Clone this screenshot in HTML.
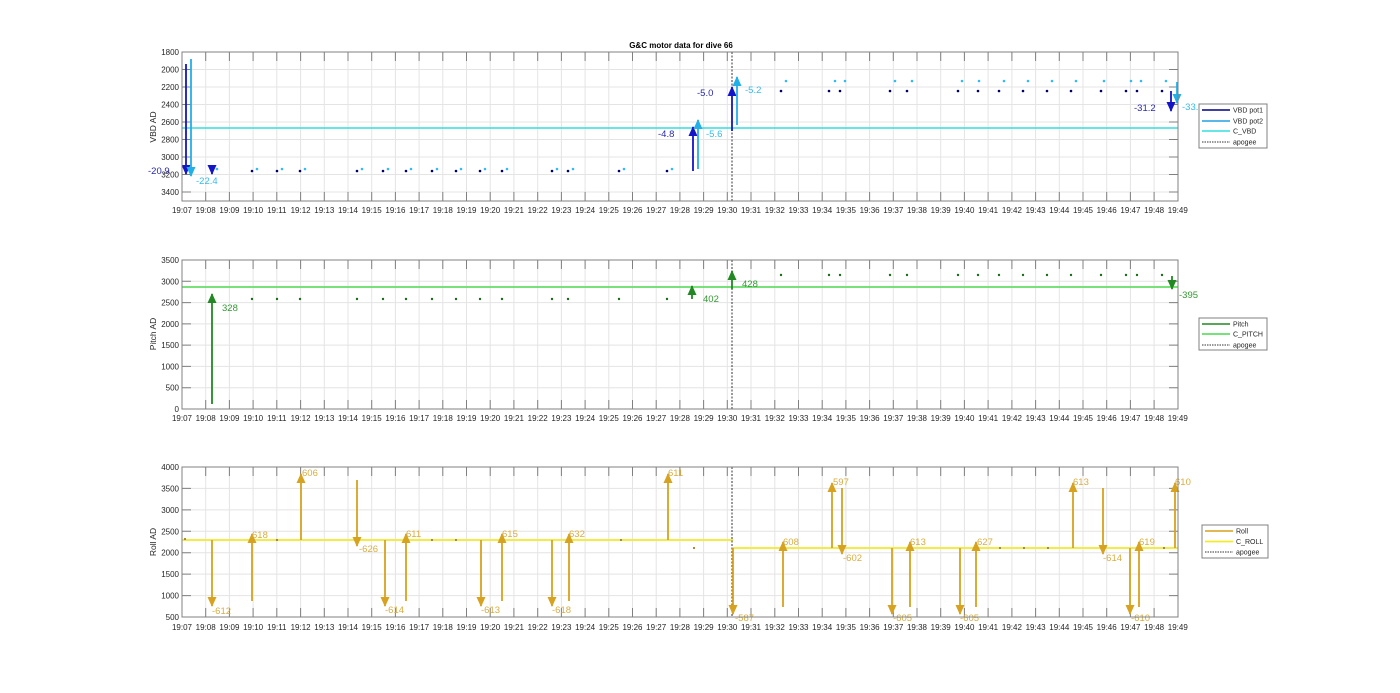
<!DOCTYPE html>
<html><head><meta charset="utf-8"><style>
html,body{margin:0;padding:0;background:#fff;}
svg{display:block;font-family:"Liberation Sans",Arial,sans-serif;}
.xl text{font-size:8px;fill:#262626;text-anchor:middle;}
.yl text{font-size:8px;fill:#262626;text-anchor:end;}
.lg text{font-size:7px;fill:#262626;}
</style></head><body>
<svg width="1400" height="693" viewBox="0 0 1400 693" xmlns="http://www.w3.org/2000/svg">
<defs>
<path id="vg" d="M205.7 0V1M229.4 0V1M253.1 0V1M276.8 0V1M300.6 0V1M324.3 0V1M348 0V1M371.7 0V1M395.4 0V1M419.1 0V1M442.8 0V1M466.5 0V1M490.2 0V1M513.9 0V1M537.7 0V1M561.4 0V1M585.1 0V1M608.8 0V1M632.5 0V1M656.2 0V1M679.9 0V1M703.6 0V1M727.3 0V1M751 0V1M774.8 0V1M798.5 0V1M822.2 0V1M845.9 0V1M869.6 0V1M893.3 0V1M917 0V1M940.7 0V1M964.4 0V1M988.1 0V1M1011.9 0V1M1035.6 0V1M1059.3 0V1M1083 0V1M1106.7 0V1M1130.4 0V1M1154.1 0V1"/>
<marker id="mB" markerUnits="userSpaceOnUse" markerWidth="10" markerHeight="9" refX="9" refY="4.5" orient="auto"><path d="M0,0L10,4.5L0,9z" fill="#1515c8"/></marker>
<marker id="mC" markerUnits="userSpaceOnUse" markerWidth="10" markerHeight="9" refX="9" refY="4.5" orient="auto"><path d="M0,0L10,4.5L0,9z" fill="#22b0e8"/></marker>
<marker id="mG" markerUnits="userSpaceOnUse" markerWidth="10" markerHeight="9" refX="9" refY="4.5" orient="auto"><path d="M0,0L10,4.5L0,9z" fill="#228822"/></marker>
<marker id="mR" markerUnits="userSpaceOnUse" markerWidth="10" markerHeight="9" refX="9" refY="4.5" orient="auto"><path d="M0,0L10,4.5L0,9z" fill="#d6a21f"/></marker>
</defs>

<!-- title -->
<text x="681" y="48" font-size="8" font-weight="bold" text-anchor="middle" fill="#000">G&amp;C motor data for dive 66</text>

<!-- ============ PANEL 1 ============ -->
<g>
<rect x="182" y="52" width="996" height="149" fill="#fff"/>
<use href="#vg" transform="translate(0,52) scale(1,149)" stroke="#e4e4e4" stroke-width="1" vector-effect="non-scaling-stroke"/>
<path d="M182 69.5H1178M182 87H1178M182 104.5H1178M182 122H1178M182 139.5H1178M182 157H1178M182 174.5H1178M182 192H1178" stroke="#e4e4e4"/>
<use href="#vg" transform="translate(0,52) scale(1,9)" stroke="#808080" vector-effect="non-scaling-stroke"/>
<use href="#vg" transform="translate(0,192) scale(1,9)" stroke="#808080" vector-effect="non-scaling-stroke"/>
<path d="M182 69.5h9M182 87h9M182 104.5h9M182 122h9M182 139.5h9M182 157h9M182 174.5h9M182 192h9M1178 69.5h-9M1178 87h-9M1178 104.5h-9M1178 122h-9M1178 139.5h-9M1178 157h-9M1178 174.5h-9M1178 192h-9" stroke="#808080"/>
<line x1="182" y1="128" x2="1178" y2="128" stroke="#33dddd" stroke-width="1.5"/>
<line x1="732" y1="52" x2="732" y2="201" stroke="#333" stroke-dasharray="2,1.5"/>
<!-- dots pot1 -->
<g fill="#000066">
<circle cx="252" cy="171" r="1.3"/><circle cx="277" cy="171" r="1.3"/><circle cx="300" cy="171" r="1.3"/><circle cx="357" cy="171" r="1.3"/><circle cx="383" cy="171" r="1.3"/><circle cx="406" cy="171" r="1.3"/><circle cx="432" cy="171" r="1.3"/><circle cx="456" cy="171" r="1.3"/><circle cx="480" cy="171" r="1.3"/><circle cx="502" cy="171" r="1.3"/><circle cx="552" cy="171" r="1.3"/><circle cx="568" cy="171" r="1.3"/><circle cx="619" cy="171" r="1.3"/><circle cx="667" cy="171" r="1.3"/>
<circle cx="781" cy="91" r="1.3"/><circle cx="829" cy="91" r="1.3"/><circle cx="840" cy="91" r="1.3"/><circle cx="890" cy="91" r="1.3"/><circle cx="907" cy="91" r="1.3"/><circle cx="958" cy="91" r="1.3"/><circle cx="978" cy="91" r="1.3"/><circle cx="999" cy="91" r="1.3"/><circle cx="1023" cy="91" r="1.3"/><circle cx="1047" cy="91" r="1.3"/><circle cx="1071" cy="91" r="1.3"/><circle cx="1101" cy="91" r="1.3"/><circle cx="1126" cy="91" r="1.3"/><circle cx="1137" cy="91" r="1.3"/><circle cx="1162" cy="91" r="1.3"/>
</g>
<g fill="#33bbee">
<circle cx="217" cy="169" r="1.3"/><circle cx="257" cy="169" r="1.3"/><circle cx="282" cy="169" r="1.3"/><circle cx="305" cy="169" r="1.3"/><circle cx="362" cy="169" r="1.3"/><circle cx="388" cy="169" r="1.3"/><circle cx="411" cy="169" r="1.3"/><circle cx="437" cy="169" r="1.3"/><circle cx="461" cy="169" r="1.3"/><circle cx="485" cy="169" r="1.3"/><circle cx="507" cy="169" r="1.3"/><circle cx="557" cy="169" r="1.3"/><circle cx="573" cy="169" r="1.3"/><circle cx="624" cy="169" r="1.3"/><circle cx="672" cy="169" r="1.3"/>
<circle cx="786" cy="81" r="1.3"/><circle cx="835" cy="81" r="1.3"/><circle cx="845" cy="81" r="1.3"/><circle cx="895" cy="81" r="1.3"/><circle cx="912" cy="81" r="1.3"/><circle cx="962" cy="81" r="1.3"/><circle cx="979" cy="81" r="1.3"/><circle cx="1004" cy="81" r="1.3"/><circle cx="1028" cy="81" r="1.3"/><circle cx="1052" cy="81" r="1.3"/><circle cx="1076" cy="81" r="1.3"/><circle cx="1104" cy="81" r="1.3"/><circle cx="1131" cy="81" r="1.3"/><circle cx="1141" cy="81" r="1.3"/><circle cx="1166" cy="81" r="1.3"/>
</g>
<!-- arrows -->
<g stroke-width="1.8">
<line x1="186" y1="64" x2="186" y2="174" stroke="#1515c8" marker-end="url(#mB)"/>
<line x1="212" y1="166" x2="212" y2="174" stroke="#1515c8" marker-end="url(#mB)"/>
<line x1="191" y1="59" x2="191" y2="176" stroke="#22b0e8" marker-end="url(#mC)"/>
<line x1="693" y1="171" x2="693" y2="127" stroke="#1515c8" marker-end="url(#mB)"/>
<line x1="698" y1="169" x2="698" y2="120" stroke="#22b0e8" marker-end="url(#mC)"/>
<line x1="732" y1="131" x2="732" y2="87" stroke="#1515c8" marker-end="url(#mB)"/>
<line x1="737" y1="125" x2="737" y2="77" stroke="#22b0e8" marker-end="url(#mC)"/>
<line x1="1171" y1="91" x2="1171" y2="111" stroke="#1515c8" marker-end="url(#mB)"/>
<line x1="1177" y1="82" x2="1177" y2="103" stroke="#22b0e8" marker-end="url(#mC)"/>
</g>
<g font-size="9.5">
<text x="148" y="174" fill="#2a2aaa">-20.9</text>
<text x="196" y="184" fill="#33bbee">-22.4</text>
<text x="658" y="137" fill="#2a2aaa">-4.8</text>
<text x="706" y="137" fill="#33bbee">-5.6</text>
<text x="697" y="96" fill="#2a2aaa">-5.0</text>
<text x="745" y="93" fill="#33bbee">-5.2</text>
<text x="1134" y="111" fill="#2a2aaa">-31.2</text>
<text x="1182" y="110" fill="#33bbee">-33.0</text>
</g>
<rect x="182" y="52" width="996" height="149" fill="none" stroke="#808080"/>
<g class="yl"><text x="179" y="55">1800</text><text x="179" y="72.5">2000</text><text x="179" y="90">2200</text><text x="179" y="107.5">2400</text><text x="179" y="125">2600</text><text x="179" y="142.5">2800</text><text x="179" y="160">3000</text><text x="179" y="177.5">3200</text><text x="179" y="195">3400</text></g>
<text transform="translate(156,127) rotate(-90)" font-size="8.5" text-anchor="middle" fill="#262626">VBD AD</text>
<g class="lg">
<rect x="1199" y="104" width="68" height="44" fill="#fff" stroke="#808080"/>
<line x1="1202" y1="110" x2="1230" y2="110" stroke="#000080" stroke-width="1.5"/><text x="1233" y="112.5">VBD pot1</text>
<line x1="1202" y1="121" x2="1230" y2="121" stroke="#22a0e0" stroke-width="1.5"/><text x="1233" y="123.5">VBD pot2</text>
<line x1="1202" y1="131" x2="1230" y2="131" stroke="#33dddd" stroke-width="1.5"/><text x="1233" y="133.5">C_VBD</text>
<line x1="1202" y1="142" x2="1230" y2="142" stroke="#333" stroke-dasharray="1.5,1"/><text x="1233" y="144.5">apogee</text>
</g>
<g class="xl" transform="translate(0,213)"><text x="182">19:07</text><text x="205.7">19:08</text><text x="229.4">19:09</text><text x="253.1">19:10</text><text x="276.8">19:11</text><text x="300.6">19:12</text><text x="324.3">19:13</text><text x="348">19:14</text><text x="371.7">19:15</text><text x="395.4">19:16</text><text x="419.1">19:17</text><text x="442.8">19:18</text><text x="466.5">19:19</text><text x="490.2">19:20</text><text x="513.9">19:21</text><text x="537.7">19:22</text><text x="561.4">19:23</text><text x="585.1">19:24</text><text x="608.8">19:25</text><text x="632.5">19:26</text><text x="656.2">19:27</text><text x="679.9">19:28</text><text x="703.6">19:29</text><text x="727.3">19:30</text><text x="751">19:31</text><text x="774.8">19:32</text><text x="798.5">19:33</text><text x="822.2">19:34</text><text x="845.9">19:35</text><text x="869.6">19:36</text><text x="893.3">19:37</text><text x="917">19:38</text><text x="940.7">19:39</text><text x="964.4">19:40</text><text x="988.1">19:41</text><text x="1011.9">19:42</text><text x="1035.6">19:43</text><text x="1059.3">19:44</text><text x="1083">19:45</text><text x="1106.7">19:46</text><text x="1130.4">19:47</text><text x="1154.1">19:48</text><text x="1177.8">19:49</text></g>
</g>

<!-- ============ PANEL 2 ============ -->
<g>
<use href="#vg" transform="translate(0,260) scale(1,149)" stroke="#e4e4e4" vector-effect="non-scaling-stroke"/>
<path d="M182 387.7H1178M182 366.4H1178M182 345.1H1178M182 323.9H1178M182 302.6H1178M182 281.3H1178" stroke="#e4e4e4"/>
<use href="#vg" transform="translate(0,260) scale(1,9)" stroke="#808080" vector-effect="non-scaling-stroke"/>
<use href="#vg" transform="translate(0,400) scale(1,9)" stroke="#808080" vector-effect="non-scaling-stroke"/>
<path d="M182 387.7h9M182 366.4h9M182 345.1h9M182 323.9h9M182 302.6h9M182 281.3h9M1178 387.7h-9M1178 366.4h-9M1178 345.1h-9M1178 323.9h-9M1178 302.6h-9M1178 281.3h-9" stroke="#808080"/>
<line x1="182" y1="287" x2="1178" y2="287" stroke="#66dd66" stroke-width="1.8"/>
<line x1="732" y1="260" x2="732" y2="409" stroke="#333" stroke-dasharray="2,1.5"/>
<g fill="#1a6b1a">
<circle cx="252" cy="299" r="1.2"/><circle cx="277" cy="299" r="1.2"/><circle cx="300" cy="299" r="1.2"/><circle cx="357" cy="299" r="1.2"/><circle cx="383" cy="299" r="1.2"/><circle cx="406" cy="299" r="1.2"/><circle cx="432" cy="299" r="1.2"/><circle cx="456" cy="299" r="1.2"/><circle cx="480" cy="299" r="1.2"/><circle cx="502" cy="299" r="1.2"/><circle cx="552" cy="299" r="1.2"/><circle cx="568" cy="299" r="1.2"/><circle cx="619" cy="299" r="1.2"/><circle cx="667" cy="299" r="1.2"/>
<circle cx="781" cy="275" r="1.2"/><circle cx="829" cy="275" r="1.2"/><circle cx="840" cy="275" r="1.2"/><circle cx="890" cy="275" r="1.2"/><circle cx="907" cy="275" r="1.2"/><circle cx="958" cy="275" r="1.2"/><circle cx="978" cy="275" r="1.2"/><circle cx="999" cy="275" r="1.2"/><circle cx="1023" cy="275" r="1.2"/><circle cx="1047" cy="275" r="1.2"/><circle cx="1071" cy="275" r="1.2"/><circle cx="1101" cy="275" r="1.2"/><circle cx="1126" cy="275" r="1.2"/><circle cx="1137" cy="275" r="1.2"/><circle cx="1162" cy="275" r="1.2"/>
</g>
<g stroke="#228822" stroke-width="1.8">
<line x1="212" y1="404" x2="212" y2="294" marker-end="url(#mG)"/>
<line x1="692" y1="299" x2="692" y2="286" marker-end="url(#mG)"/>
<line x1="732" y1="289" x2="732" y2="271" marker-end="url(#mG)"/>
<line x1="1172" y1="276" x2="1172" y2="289" marker-end="url(#mG)"/>
</g>
<g font-size="9.5" fill="#339933">
<text x="222" y="311">328</text><text x="703" y="302">402</text><text x="742" y="287">428</text><text x="1179" y="298">-395</text>
</g>
<rect x="182" y="260" width="996" height="149" fill="none" stroke="#808080"/>
<g class="yl"><text x="179" y="412">0</text><text x="179" y="390.7">500</text><text x="179" y="369.4">1000</text><text x="179" y="348.1">1500</text><text x="179" y="326.9">2000</text><text x="179" y="305.6">2500</text><text x="179" y="284.3">3000</text><text x="179" y="263">3500</text></g>
<text transform="translate(156,334) rotate(-90)" font-size="8.5" text-anchor="middle" fill="#262626">Pitch AD</text>
<g class="lg">
<rect x="1199" y="318" width="68" height="32" fill="#fff" stroke="#808080"/>
<line x1="1202" y1="324" x2="1230" y2="324" stroke="#228822" stroke-width="1.5"/><text x="1233" y="326.5">Pitch</text>
<line x1="1202" y1="334" x2="1230" y2="334" stroke="#66dd66" stroke-width="1.8"/><text x="1233" y="336.5">C_PITCH</text>
<line x1="1202" y1="345" x2="1230" y2="345" stroke="#333" stroke-dasharray="1.5,1"/><text x="1233" y="347.5">apogee</text>
</g>
<g class="xl" transform="translate(0,421)"><text x="182">19:07</text><text x="205.7">19:08</text><text x="229.4">19:09</text><text x="253.1">19:10</text><text x="276.8">19:11</text><text x="300.6">19:12</text><text x="324.3">19:13</text><text x="348">19:14</text><text x="371.7">19:15</text><text x="395.4">19:16</text><text x="419.1">19:17</text><text x="442.8">19:18</text><text x="466.5">19:19</text><text x="490.2">19:20</text><text x="513.9">19:21</text><text x="537.7">19:22</text><text x="561.4">19:23</text><text x="585.1">19:24</text><text x="608.8">19:25</text><text x="632.5">19:26</text><text x="656.2">19:27</text><text x="679.9">19:28</text><text x="703.6">19:29</text><text x="727.3">19:30</text><text x="751">19:31</text><text x="774.8">19:32</text><text x="798.5">19:33</text><text x="822.2">19:34</text><text x="845.9">19:35</text><text x="869.6">19:36</text><text x="893.3">19:37</text><text x="917">19:38</text><text x="940.7">19:39</text><text x="964.4">19:40</text><text x="988.1">19:41</text><text x="1011.9">19:42</text><text x="1035.6">19:43</text><text x="1059.3">19:44</text><text x="1083">19:45</text><text x="1106.7">19:46</text><text x="1130.4">19:47</text><text x="1154.1">19:48</text><text x="1177.8">19:49</text></g>
</g>

<!-- ============ PANEL 3 ============ -->
<g>
<use href="#vg" transform="translate(0,467) scale(1,150)" stroke="#e4e4e4" vector-effect="non-scaling-stroke"/>
<path d="M182 595.6H1178M182 574.1H1178M182 552.7H1178M182 531.3H1178M182 509.9H1178M182 488.4H1178" stroke="#e4e4e4"/>
<use href="#vg" transform="translate(0,467) scale(1,9)" stroke="#808080" vector-effect="non-scaling-stroke"/>
<use href="#vg" transform="translate(0,608) scale(1,9)" stroke="#808080" vector-effect="non-scaling-stroke"/>
<path d="M182 595.6h9M182 574.1h9M182 552.7h9M182 531.3h9M182 509.9h9M182 488.4h9M1178 595.6h-9M1178 574.1h-9M1178 552.7h-9M1178 531.3h-9M1178 509.9h-9M1178 488.4h-9" stroke="#808080"/>
<path d="M182 540H733M733 548H1178" stroke="#f2ea2a" stroke-width="1.8" fill="none"/>
<line x1="732" y1="467" x2="732" y2="617" stroke="#333" stroke-dasharray="2,1.5"/>
<g fill="#a08020">
<circle cx="185" cy="539" r="1.1"/><circle cx="277" cy="540" r="1.1"/><circle cx="432" cy="540" r="1.1"/><circle cx="456" cy="540" r="1.1"/><circle cx="621" cy="540" r="1.1"/><circle cx="694" cy="548" r="1.1"/><circle cx="1000" cy="548" r="1.1"/><circle cx="1024" cy="548" r="1.1"/><circle cx="1048" cy="548" r="1.1"/><circle cx="1164" cy="548" r="1.1"/>
</g>
<g stroke="#d6a21f" stroke-width="1.8">
<line x1="212" y1="540" x2="212" y2="606" marker-end="url(#mR)"/>
<line x1="252" y1="601" x2="252" y2="534" marker-end="url(#mR)"/>
<line x1="301" y1="540" x2="301" y2="474" marker-end="url(#mR)"/>
<line x1="357" y1="480" x2="357" y2="546" marker-end="url(#mR)"/>
<line x1="385" y1="540" x2="385" y2="606" marker-end="url(#mR)"/>
<line x1="406" y1="601" x2="406" y2="534" marker-end="url(#mR)"/>
<line x1="481" y1="540" x2="481" y2="606" marker-end="url(#mR)"/>
<line x1="502" y1="601" x2="502" y2="534" marker-end="url(#mR)"/>
<line x1="552" y1="540" x2="552" y2="606" marker-end="url(#mR)"/>
<line x1="569" y1="601" x2="569" y2="534" marker-end="url(#mR)"/>
<line x1="668" y1="540" x2="668" y2="474" marker-end="url(#mR)"/>
<line x1="733" y1="548" x2="733" y2="614" marker-end="url(#mR)"/>
<line x1="783" y1="607" x2="783" y2="542" marker-end="url(#mR)"/>
<line x1="832" y1="548" x2="832" y2="483" marker-end="url(#mR)"/>
<line x1="842" y1="488" x2="842" y2="554" marker-end="url(#mR)"/>
<line x1="892" y1="548" x2="892" y2="614" marker-end="url(#mR)"/>
<line x1="910" y1="607" x2="910" y2="542" marker-end="url(#mR)"/>
<line x1="960" y1="548" x2="960" y2="614" marker-end="url(#mR)"/>
<line x1="976" y1="607" x2="976" y2="542" marker-end="url(#mR)"/>
<line x1="1073" y1="548" x2="1073" y2="483" marker-end="url(#mR)"/>
<line x1="1103" y1="488" x2="1103" y2="554" marker-end="url(#mR)"/>
<line x1="1130" y1="548" x2="1130" y2="614" marker-end="url(#mR)"/>
<line x1="1139" y1="607" x2="1139" y2="542" marker-end="url(#mR)"/>
<line x1="1175" y1="548" x2="1175" y2="483" marker-end="url(#mR)"/>
</g>
<g font-size="9.5" fill="#d9ad40">
<text x="212" y="614">-612</text><text x="252" y="538">618</text><text x="302" y="476">606</text><text x="359" y="552">-626</text><text x="385" y="613">-614</text><text x="406" y="537">611</text><text x="481" y="613">-613</text><text x="502" y="537">615</text><text x="552" y="613">-618</text><text x="569" y="537">632</text><text x="668" y="476">611</text>
<text x="735" y="621">-587</text><text x="783" y="545">608</text><text x="833" y="485">597</text><text x="843" y="561">-602</text><text x="893" y="621">-605</text><text x="910" y="545">613</text><text x="960" y="621">-605</text><text x="977" y="545">627</text><text x="1073" y="485">613</text><text x="1103" y="561">-614</text><text x="1131" y="621">-610</text><text x="1139" y="545">619</text><text x="1175" y="485">610</text>
</g>
<rect x="182" y="467" width="996" height="150" fill="none" stroke="#808080"/>
<g class="yl"><text x="179" y="620">500</text><text x="179" y="598.6">1000</text><text x="179" y="577.1">1500</text><text x="179" y="555.7">2000</text><text x="179" y="534.3">2500</text><text x="179" y="512.9">3000</text><text x="179" y="491.4">3500</text><text x="179" y="470">4000</text></g>
<text transform="translate(156,542) rotate(-90)" font-size="8.5" text-anchor="middle" fill="#262626">Roll AD</text>
<g class="lg">
<rect x="1202" y="525" width="66" height="33" fill="#fff" stroke="#808080"/>
<line x1="1205" y1="531" x2="1233" y2="531" stroke="#d6a21f" stroke-width="1.5"/><text x="1236" y="533.5">Roll</text>
<line x1="1205" y1="541.5" x2="1233" y2="541.5" stroke="#f2ea2a" stroke-width="1.8"/><text x="1236" y="544">C_ROLL</text>
<line x1="1205" y1="552" x2="1233" y2="552" stroke="#333" stroke-dasharray="1.5,1"/><text x="1236" y="554.5">apogee</text>
</g>
<g class="xl" transform="translate(0,630)"><text x="182">19:07</text><text x="205.7">19:08</text><text x="229.4">19:09</text><text x="253.1">19:10</text><text x="276.8">19:11</text><text x="300.6">19:12</text><text x="324.3">19:13</text><text x="348">19:14</text><text x="371.7">19:15</text><text x="395.4">19:16</text><text x="419.1">19:17</text><text x="442.8">19:18</text><text x="466.5">19:19</text><text x="490.2">19:20</text><text x="513.9">19:21</text><text x="537.7">19:22</text><text x="561.4">19:23</text><text x="585.1">19:24</text><text x="608.8">19:25</text><text x="632.5">19:26</text><text x="656.2">19:27</text><text x="679.9">19:28</text><text x="703.6">19:29</text><text x="727.3">19:30</text><text x="751">19:31</text><text x="774.8">19:32</text><text x="798.5">19:33</text><text x="822.2">19:34</text><text x="845.9">19:35</text><text x="869.6">19:36</text><text x="893.3">19:37</text><text x="917">19:38</text><text x="940.7">19:39</text><text x="964.4">19:40</text><text x="988.1">19:41</text><text x="1011.9">19:42</text><text x="1035.6">19:43</text><text x="1059.3">19:44</text><text x="1083">19:45</text><text x="1106.7">19:46</text><text x="1130.4">19:47</text><text x="1154.1">19:48</text><text x="1177.8">19:49</text></g>
</g>
</svg>
</body></html>
